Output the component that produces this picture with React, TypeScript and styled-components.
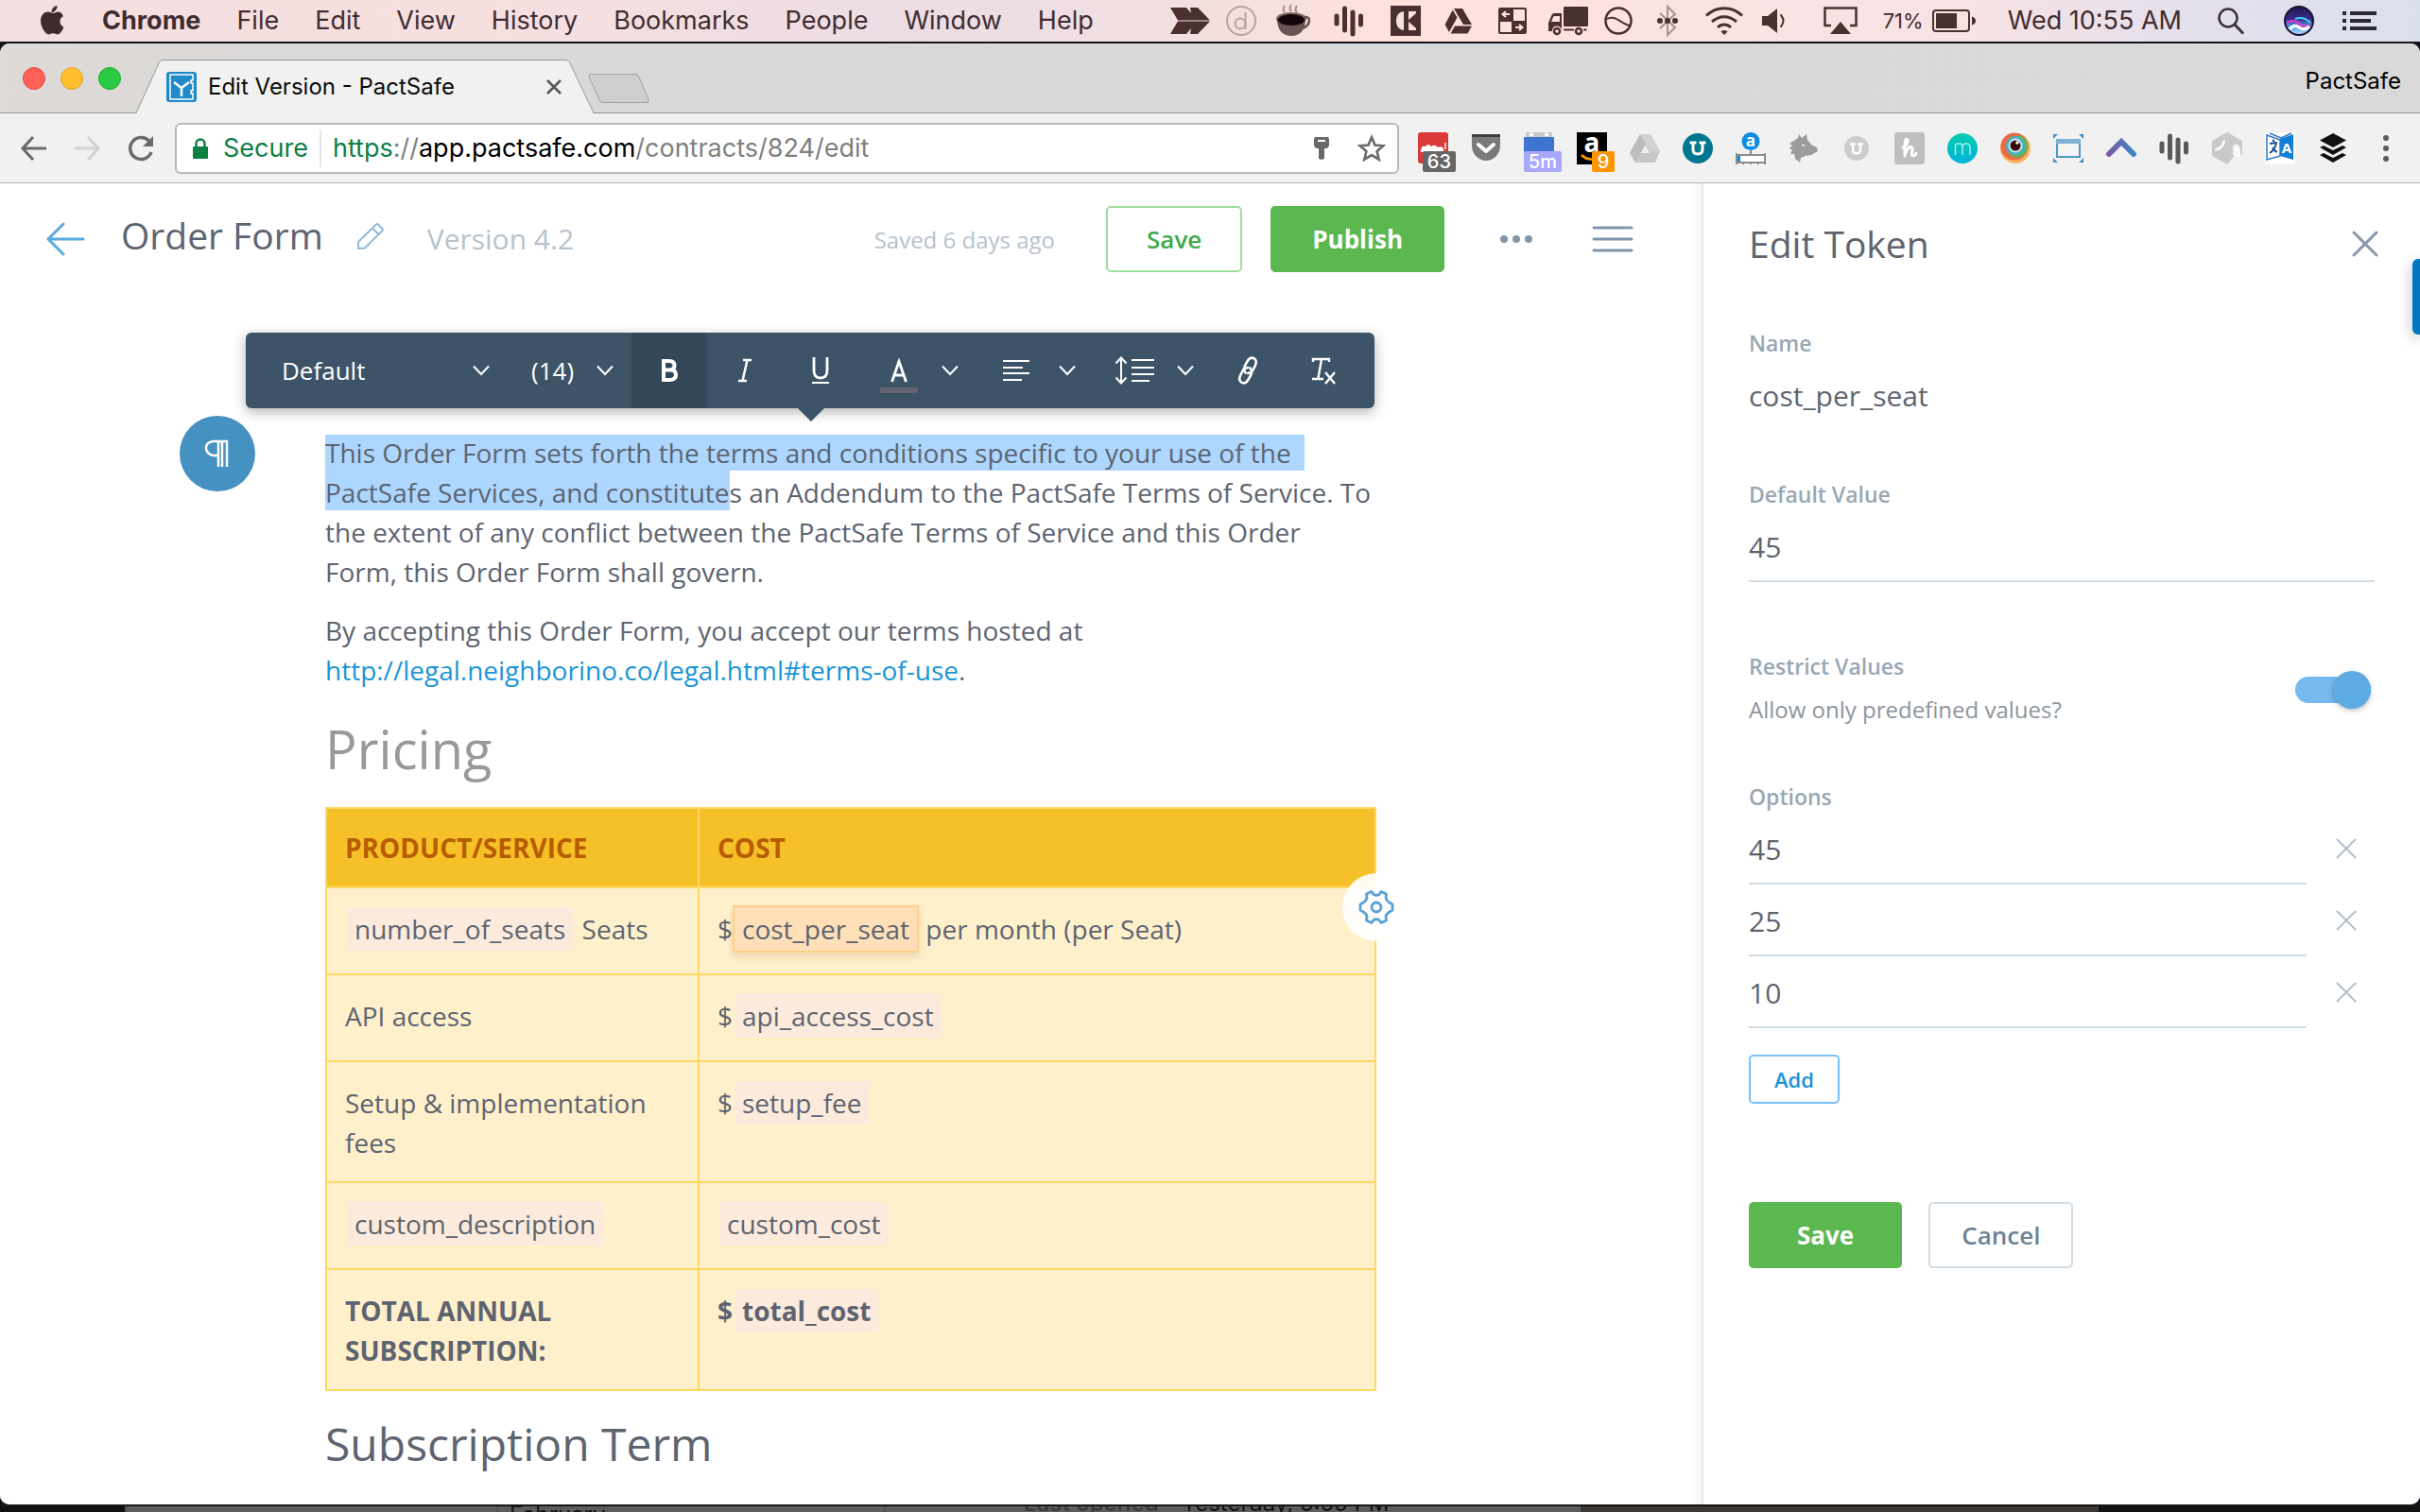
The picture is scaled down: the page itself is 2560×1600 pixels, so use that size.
import React from "react";
import styled, { createGlobalStyle, css } from "styled-components";

const SANS = '"Open Sans", "Noto Sans", sans-serif';
const SYSTEM = 'Inter, Roboto, sans-serif';

const Global = createGlobalStyle`
  *, *::before, *::after { box-sizing: border-box; }
  html, body { margin: 0; height: 100%; overflow: hidden; }
  #root { height: 100%; }
  button, input, select { font: inherit; color: inherit; margin: 0; padding: 0; border: 0; background: none; border-radius: 0; }
  button { cursor: pointer; }
  svg { display: block; flex: none; overflow: visible; }
  h1, h2, p { margin: 0; font-weight: 400; }
`;

const Screen = styled.div`
  display: flex;
  flex-direction: column;
  height: 100vh;
  background: #16121a;
  font-family: ${SANS};
`;

/* ---------- system menu bar ---------- */

const MenuBar = styled.header`
  display: flex;
  align-items: center;
  justify-content: space-between;
  height: 44px;
  margin-bottom: 2px;
  padding: 0 46px 0 42px;
  font-family: ${SYSTEM};
  font-size: 27px;
  line-height: 44px;
  white-space: nowrap;
  color: #402c30;
  background: linear-gradient(90deg, #f4dfe0 0%, #f8dfdf 20%, #ecdde5 38%, #f2dfe1 48%, #ffe1da 58%, #fbe3e4 72%, #f8e2e4 81%, #e5e0ec 90%, #dadfee 100%);
`;

const MenuList = styled.nav`
  display: flex;
  align-items: center;
  gap: 38px;
`;

const MenuItem = styled.button<{ $strong?: boolean }>`
  font-weight: ${(p) => (p.$strong ? 700 : 400)};
  margin-left: ${(p) => (p.$strong ? 2 : 0)}px;
`;

const Status = styled.div`
  display: flex;
  align-items: center;
`;

const Slot = styled.span<{ $w: number }>`
  display: flex;
  justify-content: center;
  width: ${(p) => p.$w}px;
`;

const Percent = styled.span`
  font-size: 22px;
  margin-right: 9px;
`;

const Clock = styled.span`
  margin: 0 26px 0 34px;
`;

const StatusGap = styled.span`
  display: flex;
  align-items: center;
  gap: 30px;
`;

/* ---------- browser window ---------- */

const Window = styled.div`
  display: flex;
  flex-direction: column;
  flex: 1;
  min-height: 0;
  overflow: hidden;
  border-radius: 10px;
  background: #fff;
`;

const TabStrip = styled.div`
  display: flex;
  align-items: flex-end;
  height: 74px;
  padding-left: 24px;
  border-bottom: 1px solid #989898;
  background: linear-gradient(90deg, #dddad7, #d8d8d9 35%, #d9d9d9);
  font-family: ${SYSTEM};
  font-size: 24px;
`;

const Lights = styled.div`
  display: flex;
  align-self: center;
  gap: 16px;
  width: 120px;
`;

const Light = styled.button<{ $fill: string; $edge: string }>`
  width: 24px;
  height: 24px;
  border-radius: 50%;
  border: 1px solid ${(p) => p.$edge};
  background: ${(p) => p.$fill};
`;

const Tab = styled.div`
  display: grid;
  width: 484px;
  height: 57px;
  margin-bottom: -1px;
  > * { grid-area: 1 / 1; }
`;

const TabBody = styled.div`
  display: flex;
  align-items: center;
  padding: 0 34px 0 32px;
  gap: 12px;
`;

const TabTitle = styled.span`
  flex: 1;
  white-space: nowrap;
  color: #0a0a0a;
`;

const NewTab = styled.button`
  align-self: center;
  margin: 22px 0 0 -6px;
`;

const Profile = styled.button`
  align-self: center;
  margin: 6px 20px 0 auto;
  color: #000;
`;

const NavBar = styled.div`
  display: flex;
  align-items: center;
  height: 74px;
  padding: 0 20px;
  border-bottom: 1px solid #b4b4b4;
  background: #f1f1f1;
`;

const NavButtons = styled.div`
  display: flex;
  gap: 24px;
  width: 165px;
`;

const Omnibox = styled.div`
  display: flex;
  align-items: center;
  flex: 1;
  height: 54px;
  padding: 0 10px 0 17px;
  border: 2px solid #b8b8b8;
  border-radius: 6px;
  background: #fff;
  font-family: ${SYSTEM};
  font-size: 27px;
  white-space: nowrap;
`;

const Secure = styled.span`
  display: flex;
  align-items: center;
  gap: 16px;
  padding-right: 12px;
  border-right: 2px solid #e4e4e4;
  line-height: 40px;
  color: #0b8043;
`;

const Address = styled.div`
  flex: 1;
  padding-left: 12px;
  color: #7f7f7f;
  outline: none;
  b { font-weight: 400; color: #000; }
  i { font-style: normal; color: #0b8043; }
`;

const BoxTools = styled.div`
  display: flex;
  align-items: center;
  gap: 28px;
`;

const Extensions = styled.div`
  display: flex;
  align-items: center;
  gap: 24px;
  padding-left: 20px;
`;

const Ext = styled.button`
  position: relative;
  display: grid;
  place-items: center;
  width: 32px;
  height: 34px;
`;

const Badge = styled.span<{ $bg: string }>`
  position: absolute;
  right: -8px;
  bottom: -8px;
  min-width: 24px;
  padding: 0 5px;
  border-radius: 2px;
  background: ${(p) => p.$bg};
  color: #fff;
  font: 500 20px/22px ${SYSTEM};
`;

/* ---------- page ---------- */

const Page = styled.div`
  position: relative;
  display: flex;
  flex: 1;
  min-height: 0;
  overflow: hidden;
  color: #5d6470;
`;

const Editor = styled.main`
  flex: 1;
  min-width: 0;
  background: linear-gradient(90deg, #fff calc(100% - 14px), #f8f8f8);
`;

const EditorBar = styled.div`
  display: flex;
  align-items: center;
  justify-content: space-between;
  padding: 24px 68px 24px 48px;
  white-space: nowrap;
`;

const Lead = styled.div`
  display: flex;
  align-items: center;
  gap: 38px;
`;

const TitleGroup = styled.div`
  display: flex;
  align-items: baseline;
  gap: 36px;
  padding-bottom: 8px;
`;

const Title = styled.h1`
  font-size: 39px;
  line-height: 56px;
`;

const Version = styled.span`
  padding-left: 10px;
  font-size: 30px;
  color: #b6c2ce;
`;

const Actions = styled.div`
  display: flex;
  align-items: center;
  gap: 30px;
`;

const Saved = styled.span`
  margin-right: 24px;
  font-size: 24px;
  color: #b6c2ce;
`;

const Button = styled.button<{ $kind: "solid" | "outline" | "plain" | "small" }>`
  height: 70px;
  padding: 0 44px;
  border-radius: 5px;
  font-size: 26px;
  font-weight: 600;
  ${(p) => p.$kind === "solid" && css`
    background: #5bb750;
    color: #fff;
    font-weight: 700;
  `}
  ${(p) => p.$kind === "outline" && css`
    border: 2px solid #9cdf9c;
    padding: 0 41px;
    color: #3fab4a;
  `}
  ${(p) => p.$kind === "plain" && css`
    border: 2px solid #d0dce6;
    padding: 0 33px;
    color: #6d8396;
  `}
  ${(p) => p.$kind === "small" && css`
    height: 52px;
    border: 2px solid #78c0fa;
    padding: 0 25px;
    font-size: 22px;
    color: #1b95d6;
  `}
`;

const IconButton = styled.button<{ $w: number }>`
  display: flex;
  align-items: center;
  justify-content: center;
  width: ${(p) => p.$w}px;
  height: 48px;
`;

const Doc = styled.article`
  max-width: 1112px;
  margin: 0 auto;
  padding-top: 146px;
  font-size: 28px;
  line-height: 42px;
`;

const Block = styled.div`
  position: relative;
`;

const Para = styled.p`
  margin-bottom: 20px;
`;

const Selected = styled.mark<{ $joined?: boolean }>`
  color: inherit;
  background: #add7ff;
  ${(p) => (p.$joined ? "padding-top: 4px;" : "padding-right: 14px;")}
`;

const DocLink = styled.a`
  color: #1b95d6;
  text-decoration: none;
`;

const Heading = styled.h2<{ $main?: boolean }>`
  margin: 24px 0;
  font-size: ${(p) => (p.$main ? 56 : 48)}px;
  line-height: ${(p) => (p.$main ? 76 : 64)}px;
  color: ${(p) => (p.$main ? "#999" : "#5d6470")};
`;

const ParaMark = styled.button`
  position: absolute;
  top: -18px;
  left: -154px;
  display: grid;
  place-items: center;
  width: 80px;
  height: 80px;
  border-radius: 50%;
  background: #4591c2;
`;

const FormatBar = styled.div`
  position: absolute;
  bottom: calc(100% + 26px);
  left: -84px;
  right: 2px;
  display: flex;
  height: 80px;
  padding-right: 14px;
  border-radius: 6px;
  background: #3d5368;
  color: #fff;
  font-size: 26px;
  box-shadow: 0 4px 14px rgba(0, 0, 0, 0.3);
  &::after {
    content: "";
    position: absolute;
    top: 100%;
    left: 50%;
    margin-left: -13px;
    border: 14px solid transparent;
    border-top-color: #3d5368;
    border-bottom: 0;
  }
`;

const Picker = styled.span<{ $wide?: boolean }>`
  display: grid;
  align-items: center;
  flex: ${(p) => (p.$wide ? "1" : "none")};
  width: 128px;
  > * { grid-area: 1 / 1; }
  > select {
    width: 100%;
    height: 100%;
    padding-left: ${(p) => (p.$wide ? 38 : 22)}px;
    appearance: none;
    outline: none;
  }
  > svg {
    justify-self: end;
    margin-right: ${(p) => (p.$wide ? 22 : 19)}px;
    pointer-events: none;
  }
`;

const Tool = styled.button<{ $on?: boolean; $w?: number; $gap?: number }>`
  display: flex;
  align-items: center;
  justify-content: center;
  width: ${(p) => p.$w ?? 80}px;
  gap: ${(p) => p.$gap ?? 24}px;
  background: ${(p) => (p.$on ? "#334759" : "none")};
`;

const TableWrap = styled.div`
  position: relative;
`;

const Table = styled.table`
  width: 100%;
  border-collapse: collapse;
  background: #fff0cc;
  td, th {
    border: 2px solid #ffd763;
    padding: 22px 19px 20px;
    text-align: left;
    vertical-align: top;
    font-weight: 400;
  }
  td { height: 92px; }
  thead th {
    padding: 20px 19px;
    background: #f6c128;
    color: #b85c00;
    font-weight: 700;
  }
  th:first-child { width: 394px; }
  tbody tr:last-child td { font-weight: 700; }
`;

const Token = styled.span<{ $active?: boolean }>`
  margin: 0 2px;
  padding: 4px 8px;
  background: #fcebdc;
  ${(p) => p.$active && css`
    border: 2px solid #ffcf85;
    margin: 0;
    background: #ffdfb8;
    box-shadow: 0 4px 8px rgba(120, 80, 0, 0.16);
  `}
`;

const Gear = styled.button`
  position: absolute;
  top: 70px;
  right: -36px;
  display: grid;
  place-items: center;
  width: 72px;
  height: 72px;
  border-radius: 50%;
  background: rgba(255, 255, 255, 0.92);
`;

/* ---------- token panel ---------- */

const Panel = styled.aside`
  display: flex;
  flex-direction: column;
  flex: none;
  width: 760px;
  padding: 36px 48px 0;
  border-left: 2px solid #deebf5;
  background: #fff;
`;

const PanelTop = styled.div`
  display: flex;
  align-items: center;
  justify-content: space-between;
  margin-bottom: 60px;
`;

const Close = styled.button`
  margin-right: -8px;
`;

const Label = styled.label`
  display: block;
  font-size: 23px;
  font-weight: 600;
  line-height: 34px;
  color: #98a7b5;
`;

const Field = styled.input<{ $plain?: boolean }>`
  display: block;
  width: 100%;
  height: 76px;
  padding-top: 2px;
  font-size: 30px;
  border-bottom: 2px solid ${(p) => (p.$plain ? "transparent" : "#cfdce6")};
  outline: none;
`;

const FieldGroup = styled.div`
  margin-bottom: 50px;
`;

const RestrictRow = styled.div`
  display: flex;
  align-items: center;
  justify-content: space-between;
  margin: 22px 4px 58px 0;
`;

const Hint = styled.p`
  margin-top: 12px;
  font-size: 24px;
  line-height: 34px;
  color: #8c959e;
`;

const Toggle = styled.input`
  position: relative;
  width: 80px;
  height: 28px;
  margin-top: 4px;
  appearance: none;
  border-radius: 14px;
  background: #75b9ee;
  &::before {
    content: "";
    position: absolute;
    top: -6px;
    right: 0;
    width: 40px;
    height: 40px;
    border-radius: 50%;
    background: #5dabe2;
    box-shadow: 0 2px 5px rgba(0, 0, 0, 0.25);
  }
`;

const OptionRow = styled.div`
  display: grid;
  grid-template-columns: 1fr 60px;
  column-gap: 12px;
  align-items: center;
  justify-items: center;
`;

const AddRow = styled.div`
  margin: 28px 0 104px;
`;

const PanelButtons = styled.div`
  display: flex;
  gap: 28px;
  > :first-child { padding: 0 51px; }
`;

const Launcher = styled.button`
  position: absolute;
  top: 80px;
  right: 0;
  width: 8px;
  height: 80px;
  border-radius: 6px 0 0 6px;
  background: #0077be;
  box-shadow: 0 4px 14px rgba(0, 0, 0, 0.3);
`;

/* ---------- desktop behind the window ---------- */

const Desktop = styled.div`
  display: flex;
  height: 8px;
  padding-left: 132px;
  overflow: hidden;
  border-top: 2px solid #161616;
  background: #121110;
  font: 24px/18px ${SYSTEM};
  color: #111;
`;

const Sheet = styled.div<{ $w: number; $low?: boolean; $dark?: boolean }>`
  display: flex;
  align-items: ${(p) => (p.$low ? "flex-end" : "flex-start")};
  width: ${(p) => p.$w}px;
  padding-left: 12px;
  white-space: nowrap;
  border-left: 2px solid ${(p) => (p.$dark ? "#3b3835" : "#4f4f4f")};
  background: ${(p) => (p.$dark ? "#3b3835" : "#5c5c5c")};
`;

const Dim = styled.span`
  margin: 0 24px 0 134px;
  font-weight: 600;
  color: #3c3c3c;
`;

/* ---------- icons ---------- */

const Chevron = () => (
  <svg width="18" height="12" viewBox="0 0 18 12" fill="none" stroke="#fff" strokeWidth="2">
    <path d="M1 1.500 9 10l8-8.500" />
  </svg>
);

const Cross = ({ size, color, box }: { size: number; color: string; box: number }) => (
  <svg width={box} height={box} viewBox={`${-box / 2} ${-box / 2} ${box} ${box}`} stroke={color} strokeWidth={size > 22 ? 3 : 2} strokeLinecap="round">
    <path d={`M${-size / 2} ${-size / 2}L${size / 2} ${size / 2}M${size / 2} ${-size / 2}L${-size / 2} ${size / 2}`} />
  </svg>
);

const Apple = () => (
  <svg width="26" height="32" viewBox="0 0 26 32" fill="#402c30">
    <path d="M18.500 0c.2 2-.6 3.800-1.700 5.100-1.100 1.300-2.700 2.200-4.300 2.100-.2-1.900.7-3.800 1.700-5C15.300.9 17.100.1 18.500 0zM24.800 11.200c-.3.200-3.300 1.800-3.300 5.500 0 4.300 3.800 5.800 3.900 5.900 0 .1-.6 2.100-2 4.200-1.200 1.800-2.500 3.600-4.500 3.600s-2.500-1.200-4.800-1.200-3 1.200-4.800 1.200c-1.900 0-3.200-1.700-4.700-3.800C2.700 24.100 1 19.900 1 16c0-6.200 4-9.500 8-9.500 2.100 0 3.900 1.400 5.200 1.400 1.300 0 3.200-1.500 5.600-1.500.9 0 3.500.1 5 4.800z" />
  </svg>
);

const Drive = ({ c, w, h }: { c: string; w: number; h: number }) => (
  <svg width={w} height={h} viewBox="0 0 30 28" fill={c}>
    <path d="M10 1h9l10 17H20zM8.800 2.500l4.700 8L5 26 .5 18zM11 19.500h18L24.500 27.500H6.500z" />
  </svg>
);

const Bars = ({ c }: { c: string }) => (
  <svg width="32" height="34" viewBox="0 0 32 34" stroke={c} strokeWidth="5" strokeLinecap="round">
    <path d="M3 12v8M11.500 4v23M20 8v23M28.500 12v9" />
  </svg>
);

const MENU = ["File", "Edit", "View", "History", "Bookmarks", "People", "Window", "Help"];
const INK = "#4a302f";

const StatusIcons = () => (
  <>
    <Slot $w={46}>
      <svg width="42" height="28" viewBox="0 0 42 28" fill={INK}>
        <path d="M0 0h17l5 6-1-6h8l13 13.500H8zM8 14.500h34L29 28h-8l1-6-5 6H0z" />
      </svg>
    </Slot>
    <Slot $w={62}>
      <svg width="32" height="34" viewBox="0 0 32 34" fill="none" stroke="#b9a2a4" strokeWidth="2">
        <circle cx="16" cy="17" r="15" />
        <circle cx="15" cy="20" r="5.500" />
        <path d="M20.500 8v18" />
      </svg>
    </Slot>
    <Slot $w={48}>
      <svg width="38" height="34" viewBox="0 0 38 34">
        <path d="M10 8q-3-3 0-7M17 7q-3-3 0-7M23 8q-3-3 0-7" fill="none" stroke="#a58f91" strokeWidth="2" />
        <ellipse cx="17" cy="15" rx="16" ry="7" fill="#7a6466" />
        <path d="M2 15c0 13 7 18 15 18s15-5 15-18z" fill="#6a5255" />
        <ellipse cx="17" cy="16" rx="14" ry="6" fill="#120608" />
        <path d="M31 13c8-1 6 10-3 12" fill="none" stroke="#6a5255" strokeWidth="2.500" />
      </svg>
    </Slot>
    <Slot $w={70}><Bars c={INK} /></Slot>
    <Slot $w={50}>
      <svg width="32" height="32" viewBox="0 0 32 32">
        <path d="M0 0h32v32H0z" fill={INK} />
        <path d="M14 6v20C8 25 6 21 6 16S8 7 14 6zM19 6h8v20h-8z" fill="#fce2dc" />
        <path d="M27 8v16l-9-8z" fill={INK} />
      </svg>
    </Slot>
    <Slot $w={62}><Drive c={INK} w={30} h={28} /></Slot>
    <Slot $w={52}>
      <svg width="30" height="28" viewBox="0 0 30 28" fill={INK}>
        <path fillRule="evenodd" d="M2 0h26a2 2 0 0 1 2 2v24a2 2 0 0 1-2 2H2a2 2 0 0 1-2-2V2a2 2 0 0 1 2-2zM16 2v12h12V3q0-1-1-1zM2 15v10q0 1 1 1h11V15z" />
        <path d="M12 7H5m3-3L4.500 7 8 10M18 21h7m-3-3 3.500 3-3.500 3" fill="none" stroke="#fde2de" strokeWidth="2" />
      </svg>
    </Slot>
    <Slot $w={66}>
      <svg width="42" height="30" viewBox="0 0 42 30" fill={INK}>
        <rect x="16" width="26" height="21" rx="1" />
        <path fillRule="evenodd" d="M14 7H6Q4 7 3 10L0 17v9h4a5 5 0 0 1 10-1zM12 10v6H3l2-5q.500-1 1.500-1z" />
        <circle cx="9" cy="26" r="3" fill="none" stroke={INK} strokeWidth="2.500" />
        <circle cx="32" cy="26" r="3" fill="none" stroke={INK} strokeWidth="2.500" />
        <path d="M16 23.500h11v2H16zM37 23.500h4l-1 2h-3z" />
      </svg>
    </Slot>
    <Slot $w={40}>
      <svg width="30" height="30" viewBox="0 0 30 30" fill="none" stroke={INK} strokeWidth="2.500">
        <circle cx="15" cy="15" r="13.500" />
        <path d="M3 13C12 8 17 18 27 20" strokeWidth="2" />
      </svg>
    </Slot>
    <Slot $w={64}>
      <svg width="24" height="34" viewBox="0 0 24 34" fill="none" stroke="#a98f92" strokeWidth="2">
        <path d="M4 9l16 15-8 8V2l8 8L4 25" />
        <g fill={INK} stroke="none"><circle cx="4" cy="17" r="3" /><circle cx="12" cy="17" r="3" /><circle cx="20" cy="17" r="3" /></g>
      </svg>
    </Slot>
    <Slot $w={56}>
      <svg width="40" height="30" viewBox="0 0 40 30" fill="none" stroke={INK} strokeWidth="3">
        <path d="M1 9.500C12-1 28-1 39 9.500M7 16c8-7 18-7 26 0M13 22c4-4 10-4 14 0" />
        <path d="M16.500 26.500c2-2 5-2 7 0L20 30z" fill={INK} stroke="none" />
      </svg>
    </Slot>
    <Slot $w={50}>
      <svg width="26" height="26" viewBox="0 0 26 26" fill={INK}>
        <path d="M0 8h6l10-8v26L6 18H0z" />
        <path d="M20 7q5 6 0 12" fill="none" stroke={INK} strokeWidth="2" strokeLinecap="round" />
      </svg>
    </Slot>
    <Slot $w={90}>
      <svg width="36" height="30" viewBox="0 0 36 30" fill="none" stroke={INK} strokeWidth="2.500">
        <path d="M8 20H1.500V1.500h33V20H28" />
        <path d="M18 16l11 13H7z" fill={INK} stroke="none" />
      </svg>
    </Slot>
  </>
);

const Extension = () => (
  <Extensions>
    <Ext aria-label="Last pass">
      <svg width="32" height="34" viewBox="0 0 32 34">
        <rect width="32" height="33" rx="3" fill="#d93a37" />
        <path d="M3 19q1-6 5-4 3-4 6 0 4-3 7 1 3-2 6 1v4H3z" fill="#fff" />
        <path d="M29 11v7" stroke="#fff" strokeWidth="1.500" />
      </svg>
      <Badge $bg="#666">63</Badge>
    </Ext>
    <Ext aria-label="Pocket">
      <svg width="32" height="32" viewBox="0 0 32 32">
        <path d="M1 2h30v11a15 16 0 0 1-30 0z" fill="#7a7a7a" />
        <path d="M1 1h30v3H1z" fill="#3e3e3e" />
        <path d="m8 12 8 7 8-7" fill="none" stroke="#fff" strokeWidth="4" strokeLinecap="round" strokeLinejoin="round" />
      </svg>
    </Ext>
    <Ext aria-label="Calendar timer">
      <svg width="32" height="34" viewBox="0 0 32 34">
        <path d="M2 0h28v8H2z" fill="#c9c9c9" />
        <path d="M0 6q0-1 1-1h30q1 0 1 1v16H0z" fill="#3f74d1" />
        <circle cx="8" cy="2.500" r="2" fill="#fff" /><circle cx="24" cy="2.500" r="2" fill="#fff" />
      </svg>
      <Badge $bg="#a9a9fb">5m</Badge>
    </Ext>
    <Ext aria-label="Amazon assistant">
      <svg width="32" height="34" viewBox="0 0 32 34">
        <path d="M0 0h32v34H0z" />
        <text x="16" y="21" textAnchor="middle" fontFamily={SANS} fontWeight="700" fontSize="28" fill="#fff">a</text>
        <path d="M5 24q6 6 14 4" fill="none" stroke="#f90" strokeWidth="2.500" />
      </svg>
      <Badge $bg="#ff9500">9</Badge>
    </Ext>
    <Ext aria-label="Drive">
      <svg width="32" height="30" viewBox="0 0 32 30">
        <path fillRule="evenodd" d="M11 0h11l10 18-5 12H6L0 20zM16.500 12 12 20h9z" fill="#c6c6c6" />
        <path d="M11 0h11l10 18H21z" fill="#d2d2d2" />
        <path d="M0 20 11 0l5.500 10L6 30z" fill="#bdbdbd" />
        <path d="M16.500 12 12 20h9z" fill="#f1f1f1" />
      </svg>
    </Ext>
    <Ext aria-label="U extension">
      <svg width="32" height="34" viewBox="0 0 32 34">
        <circle cx="16" cy="17" r="16" fill="#007791" />
        <path d="M7.500 11h7M17.500 11h7M11 11v7q0 5 5 5t5-5v-7" fill="none" stroke="#fff" strokeWidth="3" />
      </svg>
    </Ext>
    <Ext aria-label="Price tracker">
      <svg width="32" height="34" viewBox="0 0 32 34">
        <circle cx="16" cy="9.500" r="9.500" fill="#0c8ce9" />
        <text x="16" y="15" textAnchor="middle" fontFamily={SANS} fontWeight="700" fontSize="17" fill="#fff">a</text>
        <path d="M16 19v4M1 22v12M31 22v12M1 24h30M1 32h30M8 32v2M16 32v2M24 32v2" stroke="#8c8c8c" strokeWidth="2" />
        <path d="M2 25h28v6H2z" fill="#fff" /><path d="M2 25h3v6H2z" fill="#0c8ce9" />
      </svg>
    </Ext>
    <Ext aria-label="Wolf">
      <svg width="32" height="30" viewBox="0 0 32 30" fill="#9c9c9c">
        <path d="M1 10 10 4l1-4 3 4 5-4 1 6 4 5 6 3 1 4-7 4-6 1-5 2-1 5-5-4-1-5-4 0 2-4-3-2 3-3z" />
        <path d="m14 10 4 2-3 1z" fill="#f1f1f1" />
      </svg>
    </Ext>
    <Ext aria-label="U extension, inactive">
      <svg width="26" height="28" viewBox="0 0 26 28">
        <circle cx="13" cy="14" r="13" fill="#cdcdcd" />
        <path d="M6 9.500h6M14 9.500h6M9 9.500v5q0 5 4 5t4-5v-5" fill="none" stroke="#fff" strokeWidth="2.500" />
      </svg>
    </Ext>
    <Ext aria-label="Honey">
      <svg width="32" height="34" viewBox="0 0 32 34">
        <rect width="32" height="34" rx="3" fill="#bfbfc1" />
        <path d="M9 16c3-1 6-5 5-8-1-2-3 0-3 4v13M12 22c1-6 7-9 7-4 0 3-2 7 1 7 2 0 3-2 3-3" fill="none" stroke="#fff" strokeWidth="3" strokeLinecap="round" />
      </svg>
    </Ext>
    <Ext aria-label="m extension">
      <svg width="32" height="34" viewBox="0 0 32 34">
        <defs><linearGradient id="teal" x1="0" y1="1" x2="0" y2="0"><stop stopColor="#00b4dc" /><stop offset="1" stopColor="#05cdb0" /></linearGradient></defs>
        <circle cx="16" cy="17" r="16" fill="url(#teal)" />
        <path d="M8.500 24V13q0-1 4-1 3.500 0 3.500 4v8m0-8q0-4 4-4t4 4v8" fill="none" stroke="#a5efe9" strokeWidth="1.500" />
      </svg>
    </Ext>
    <Ext aria-label="Colour picker">
      <svg width="32" height="34" viewBox="0 0 32 34">
        <circle cx="16" cy="17" r="16" fill="#f9b563" /><circle cx="15" cy="15" r="14.500" fill="#ec6a45" />
        <circle cx="18" cy="15" r="11.500" fill="#62b35c" /><circle cx="16" cy="14" r="10" fill="#45b1c9" /><circle cx="16" cy="14" r="7.500" fill="#cde7ec" />
        <circle cx="16" cy="14" r="5.500" fill="#330a08" /><circle cx="18" cy="11" r="1.800" fill="#fff" />
      </svg>
    </Ext>
    <Ext aria-label="Window resizer">
      <svg width="32" height="32" viewBox="0 0 32 32">
        <path d="M0 1h5L0 6zM32 1h-5l5 5zM0 31h5l-5-5zM32 31h-5l5-5z" fill="#3f8fc0" />
        <rect x="4" y="7" width="24" height="18" fill="#f4f4f4" stroke="#4b97c6" strokeWidth="2" />
        <path d="M3 6h26v5H3z" fill="#7fb2d3" />
      </svg>
    </Ext>
    <Ext aria-label="Caret">
      <svg width="32" height="22" viewBox="0 0 32 22">
        <defs><linearGradient id="caret"><stop stopColor="#7a5aa0" /><stop offset="1" stopColor="#3f86c8" /></linearGradient></defs>
        <path d="M3 17 16 4l13 13" fill="none" stroke="url(#caret)" strokeWidth="6" strokeLinecap="round" />
      </svg>
    </Ext>
    <Ext aria-label="Audio bars"><Bars c="#5a5a5a" /></Ext>
    <Ext aria-label="Box">
      <svg width="32" height="34" viewBox="0 0 32 34">
        <path d="m16 0 16 9v15l-7-1-9 11L0 25V9z" fill="#c9c9c9" />
        <path d="M3 18c2-2 6-2 7-6q1-4 4-4 0 6-4 9-3 3-7 3zM22 24V15q3-4 6-1l2 3v9z" fill="#f8f8f8" />
      </svg>
    </Ext>
    <Ext aria-label="Translate">
      <svg width="32" height="34" viewBox="0 0 32 34">
        <path d="M0 0h32v34H0z" fill="#fff" />
        <path d="M5 1l12 5 11-5" fill="none" stroke="#3676c4" strokeWidth="1.500" />
        <path d="M16 7 30 2v27l-14-4z" fill="#0f7fd8" />
        <path d="M2 3l14 5v17L2 29z" fill="#fff" stroke="#2f74c6" strokeWidth="1.500" />
        <path d="M5 12l7-1q-1 7-7 11m3-6q2 4 5 5M8 8l2 2" fill="none" stroke="#1b4a94" strokeWidth="1.800" />
        <text x="23" y="22" textAnchor="middle" fontFamily={SANS} fontWeight="700" fontSize="15" fill="#fff">A</text>
      </svg>
    </Ext>
    <Ext aria-label="Buffer">
      <svg width="30" height="32" viewBox="0 0 30 32" fill="#111">
        <path d="M15 0l14 7.500L15 15 1 7.500z" />
        <path d="m1 15 4-2 10 5 10-5 4 2-14 8zM1 23l4-2 10 5 10-5 4 2-14 8z" />
      </svg>
    </Ext>
    <Ext aria-label="Menu">
      <svg width="6" height="28" viewBox="0 0 6 28" fill="#5a5a5a">
        <circle cx="3" cy="3" r="3" /><circle cx="3" cy="14" r="3" /><circle cx="3" cy="25" r="3" />
      </svg>
    </Ext>
  </Extensions>
);

const OPTIONS = ["45", "25", "10"];

export default function App() {
  return (
    <Screen>
      <Global />
      <MenuBar>
        <MenuList>
          <Apple />
          <MenuItem $strong>Chrome</MenuItem>
          {MENU.map((m) => <MenuItem key={m}>{m}</MenuItem>)}
        </MenuList>
        <Status>
          <StatusIcons />
          <Percent>71%</Percent>
          <svg width="46" height="24" viewBox="0 0 46 24" fill="none" stroke={INK} strokeWidth="2">
            <rect x="1" y="1" width="38" height="22" rx="3" />
            <path d="M4 4h22v16H4z" fill={INK} stroke="none" />
            <path d="M42 7.500q4 1.500 4 4.500t-4 4.500z" fill={INK} stroke="none" />
          </svg>
          <Clock>Wed 10:55 AM</Clock>
          <StatusGap>
            <Slot $w={52}>
              <svg width="28" height="28" viewBox="0 0 28 28" fill="none" stroke="#3a303c" strokeWidth="2.500">
                <circle cx="11" cy="11" r="9.500" /><path d="m18 18 9 9.500" strokeWidth="3" />
              </svg>
            </Slot>
            <svg width="32" height="32" viewBox="0 0 32 32">
              <defs>
                <linearGradient id="orb" x1="0" y1="0" x2="0" y2="1"><stop stopColor="#241650" /><stop offset=".45" stopColor="#3b2a8c" /><stop offset=".7" stopColor="#49a5e8" /><stop offset="1" stopColor="#c9d2ff" /></linearGradient>
              </defs>
              <circle cx="16" cy="16" r="15" fill="url(#orb)" stroke="#15122e" strokeWidth="2" />
              <path d="M3 18q8-4 13 1t12 2" fill="none" stroke="#d53fd0" strokeWidth="2.500" />
              <path d="M6 25q5-6 10-2t11-1" fill="none" stroke="#fff" strokeWidth="3" />
              <path d="M12 14q9-3 16 4" fill="none" stroke="#45d6f2" strokeWidth="2" />
            </svg>
            <svg width="36" height="20" viewBox="0 0 36 20" fill="#2c2734">
              <path d="M0 0h4v4H0zM0 8h4v4H0zM0 16h4v4H0zM8 0h28v4H8zM8 8h22v4H8zM8 16h28v4H8z" />
            </svg>
          </StatusGap>
        </Status>
      </MenuBar>

      <Window>
        <TabStrip>
          <Lights>
            <Light $fill="#ff6159" $edge="#e24640" aria-label="Close window" />
            <Light $fill="#ffbf2f" $edge="#dfa023" aria-label="Minimise window" />
            <Light $fill="#2acb42" $edge="#1daa2d" aria-label="Zoom window" />
          </Lights>
          <Tab>
            <svg width="484" height="57" viewBox="0 0 484 57">
              <path d="M0 56.500 24.500 3Q26 .500 29 .500H454Q457 .500 458.500 3L484 56.500" fill="#f1f1f1" stroke="#989898" />
              <path d="M1 57h482" stroke="#f1f1f1" strokeWidth="2" />
            </svg>
            <TabBody>
              <svg width="32" height="32" viewBox="0 0 32 32">
                <rect width="32" height="32" rx="3" fill="#1f8bc9" />
                <path d="M4 3h24v6h-2v3h2v8h-2v3h2v6H4z" fill="none" stroke="#fff" strokeWidth="1.500" />
                <path d="M8 11l8 6v9M16 17l8-6" fill="none" stroke="#fff" strokeWidth="2.500" />
              </svg>
              <TabTitle>Edit Version - PactSafe</TabTitle>
              <svg width="16" height="16" viewBox="0 0 16 16" stroke="#555" strokeWidth="2.500"><path d="m1 1 14 14M15 1 1 15" /></svg>
            </TabBody>
          </Tab>
          <NewTab aria-label="New tab">
            <svg width="66" height="32" viewBox="0 0 66 32" fill="#cfcfcf" stroke="#a0a0a0">
              <path d="M3 .500h47q3 0 4 3l10 24q1 3-1 3H16q-3 0-4-3L1 3.500Q0 .500 3 .500z" />
            </svg>
          </NewTab>
          <Profile>PactSafe</Profile>
        </TabStrip>

        <NavBar>
          <NavButtons>
            <button aria-label="Back">
              <svg width="32" height="28" viewBox="0 0 32 28" fill="none" stroke="#6a6a6a" strokeWidth="3"><path d="M15 2 4 14l11 12M4 14h25" /></svg>
            </button>
            <button aria-label="Forward">
              <svg width="32" height="28" viewBox="0 0 32 28" fill="none" stroke="#d2d2d2" strokeWidth="3"><path d="m17 2 11 12-11 12M28 14H3" /></svg>
            </button>
            <button aria-label="Reload">
              <svg width="32" height="28" viewBox="0 0 32 28" fill="none" stroke="#6a6a6a" strokeWidth="3.500">
                <path d="M28 18A11.500 11.500 0 1 1 25.500 6" /><path d="M30 1v11H19z" fill="#6a6a6a" stroke="none" />
              </svg>
            </button>
          </NavButtons>
          <Omnibox>
            <Secure>
              <svg width="16" height="22" viewBox="0 0 16 22"><rect y="9" width="16" height="13" rx="1" fill="#0b8043" /><path d="M3.500 10V6a4.500 4.500 0 0 1 9 0v4" fill="none" stroke="#0b8043" strokeWidth="2.500" /></svg>
              Secure
            </Secure>
            <Address role="textbox" aria-label="Address" contentEditable suppressContentEditableWarning spellCheck={false}>
              <i>https</i>://<b>app.pactsafe.com</b>/contracts/824/edit
            </Address>
            <BoxTools>
              <button aria-label="Saved passwords">
                <svg width="16" height="24" viewBox="0 0 16 24" fill="#6a6a6a"><path fillRule="evenodd" d="M1 0h14l1 2v7l-2 3h-3v11l-3 1-3-1V12H2L0 9V2zM4 3v2h8V3z" /></svg>
              </button>
              <button aria-label="Bookmark this page">
                <svg width="34" height="32" viewBox="-1 -1 32 30" fill="none" stroke="#6a6a6a" strokeWidth="2.500"><path d="m15 3 3.300 7.700 8.200.7-6.200 5.400 1.900 8.200-7.200-4.400L7.800 25l1.900-8.200-6.200-5.400 8.200-.7z" /></svg>
              </button>
            </BoxTools>
          </Omnibox>
          <Extension />
        </NavBar>

        <Page>
          <Editor>
            <EditorBar>
              <Lead>
                <a href="#contracts" aria-label="Back to contracts">
                  <svg width="42" height="38" viewBox="0 0 42 38" fill="none" stroke="#58aae0" strokeWidth="3" strokeLinecap="round" strokeLinejoin="round"><path d="M19 3 3 19l16 16M3 19h37" /></svg>
                </a>
                <TitleGroup>
                  <Title>Order Form</Title>
                  <button aria-label="Rename">
                    <svg width="28" height="28" viewBox="0 0 28 28" fill="none" stroke="#8fb9dd" strokeWidth="2" strokeLinejoin="round"><path d="M1 27v-7L20 1.500q1-1 2 0l4.500 4.500q1 1 0 2L8 26.500zM16 5.500l6.500 6.500" /></svg>
                  </button>
                  <Version>Version 4.2</Version>
                </TitleGroup>
              </Lead>
              <Actions>
                <Saved>Saved 6 days ago</Saved>
                <Button $kind="outline">Save</Button>
                <Button $kind="solid">Publish</Button>
                <IconButton $w={92} aria-label="More">
                  <svg width="34" height="8" viewBox="0 0 34 8" fill="#8396a8"><circle cx="4" cy="4" r="4" /><circle cx="17" cy="4" r="4" /><circle cx="30" cy="4" r="4" /></svg>
                </IconButton>
                <IconButton $w={52} aria-label="Menu">
                  <svg width="44" height="28" viewBox="0 0 44 28" stroke="#8396a8" strokeWidth="3" strokeLinecap="round"><path d="M2 2h40M2 14h40M2 26h40" /></svg>
                </IconButton>
              </Actions>
            </EditorBar>

            <Doc>
              <Block>
                <FormatBar role="toolbar" aria-label="Formatting">
                  <Picker $wide>
                    <select aria-label="Font"><option>Default</option></select>
                    <Chevron />
                  </Picker>
                  <Picker>
                    <select aria-label="Size"><option>(14)</option></select>
                    <Chevron />
                  </Picker>
                  <Tool $on aria-label="Bold">
                    <svg width="20" height="26" viewBox="0 0 20 26" fill="none" stroke="#fff" strokeWidth="4"><path d="M4 3h6q5.500 0 5.500 4.700T10 12.500H4zM4 12.500h7q6 0 6 5t-6 5.500H4zM4 2v22" /></svg>
                  </Tool>
                  <Tool aria-label="Italic">
                    <svg width="18" height="26" viewBox="0 0 18 26" fill="none" stroke="#fff" strokeWidth="2.500"><path d="M7 2h9M2 24h9M11.500 2l-5 22" /></svg>
                  </Tool>
                  <Tool aria-label="Underline">
                    <svg width="22" height="30" viewBox="0 0 22 30" fill="none" stroke="#fff" strokeWidth="2.800"><path d="M4 1v14q0 8 7 8t7-8V1" /><path d="M2 28h18" strokeWidth="2" /></svg>
                  </Tool>
                  <Tool $w={128} aria-label="Text colour">
                    <svg width="42" height="52" viewBox="0 0 42 52"><path d="M13.500 38 21 16.500 28.500 38M16 31h10" fill="none" stroke="#fff" strokeWidth="2.800" /><path d="M1 44h40v6H1z" fill="#616470" /></svg>
                    <Chevron />
                  </Tool>
                  <Tool $w={126} $gap={30} aria-label="Alignment">
                    <svg width="30" height="26" viewBox="0 0 30 26" stroke="#fff" strokeWidth="2"><path d="M1 3h28M1 10h21M1 16h28M1 23h20" /></svg>
                    <Chevron />
                  </Tool>
                  <Tool $w={118} aria-label="Line spacing">
                    <svg width="42" height="30" viewBox="0 0 42 30" fill="none" stroke="#fff" strokeWidth="2"><path d="M7 1v28M1.500 7.500 7 1.500l5.500 6M1.500 22.500 7 28.500l5.500-6M18 4h24M18 12h24M18 19h24M18 26h19" /></svg>
                    <Chevron />
                  </Tool>
                  <Tool aria-label="Link">
                    <svg width="22" height="30" viewBox="-11 -15 22 30" fill="none" stroke="#fff" strokeWidth="2.600" strokeLinecap="round"><path d="M-2.500 2.500C-5-.5-4-4-2-7L0-10.500Q3-15 7-12.500 10-10 8-5.500L5.500-.5Q4 2.500 0 3" /><path d="M2.500-2.500C5 .5 4 4 2 7L0 10.500Q-3 15-7 12.500-10 10-8 5.500L-5.500.5Q-4-2.500 0-3" /></svg>
                  </Tool>
                  <Tool aria-label="Clear formatting">
                    <svg width="26" height="30" viewBox="0 0 26 30" fill="none" stroke="#fff" strokeWidth="2.400"><path d="M2 6V3h17v3M11 3 7.500 23M1 24h12M15 17l10 12M25 17 15 29" /></svg>
                  </Tool>
                </FormatBar>
                <ParaMark aria-label="Paragraph">
                  <svg width="26" height="30" viewBox="0 0 26 30" fill="none" stroke="#fff" strokeWidth="2.500"><path d="M23 29V2H8.500Q1 3 1 9t7.500 8H14M14 2v27M18 2v27" /></svg>
                </ParaMark>
                <Para>
                  <Selected>This Order Form sets forth the terms and conditions specific to your use of the</Selected>{" "}
                  <Selected $joined>PactSafe Services, and constitute</Selected>s an Addendum to the PactSafe Terms of Service. To the extent of any conflict between the PactSafe Terms of Service and this Order Form, this Order Form shall govern.
                </Para>
              </Block>
              <Para>
                By accepting this Order Form, you accept our terms hosted at <DocLink href="#terms">http://legal.neighborino.co/legal.html#terms-of-use</DocLink>.
              </Para>
              <Heading $main>Pricing</Heading>
              <TableWrap>
                <Table>
                  <thead>
                    <tr><th scope="col">PRODUCT/SERVICE</th><th scope="col">COST</th></tr>
                  </thead>
                  <tbody>
                    <tr><td><Token>number_of_seats</Token> Seats</td><td>$<Token $active>cost_per_seat</Token> per month (per Seat)</td></tr>
                    <tr><td>API access</td><td>$<Token>api_access_cost</Token></td></tr>
                    <tr><td>Setup &amp; implementation fees</td><td>$<Token>setup_fee</Token></td></tr>
                    <tr><td><Token>custom_description</Token></td><td><Token>custom_cost</Token></td></tr>
                    <tr><td>TOTAL ANNUAL SUBSCRIPTION:</td><td>$<Token>total_cost</Token></td></tr>
                  </tbody>
                </Table>
                <Gear aria-label="Table settings">
                  <svg width="38" height="38" viewBox="-19 -19 38 38" fill="none" stroke="#55a2d9" strokeWidth="2.800" strokeLinejoin="round">
                    <path d="M-3 -13.500Q0 -12 3 -13.500L5 -16.500 10.500 -14 10 -10Q10.500 -7 13 -5.500L17 -3V3L13 5.500Q10.500 7 10 10L10.500 14 5 16.500 3 13.500Q0 12 -3 13.500L-5 16.500 -10.500 14 -10 10Q-10.500 7 -13 5.500L-17 3V-3L-13 -5.500Q-10.500 -7 -10 -10L-10.500 -14 -5 -16.500z" />
                    <circle r="5" />
                  </svg>
                </Gear>
              </TableWrap>
              <Heading>Subscription Term</Heading>
            </Doc>
          </Editor>

          <Panel>
            <PanelTop>
              <Title as="h2">Edit Token</Title>
              <Close aria-label="Close panel"><Cross size={24} box={36} color="#8698a9" /></Close>
            </PanelTop>
            <FieldGroup>
              <Label htmlFor="name">Name</Label>
              <Field id="name" $plain readOnly defaultValue="cost_per_seat" />
            </FieldGroup>
            <FieldGroup>
              <Label htmlFor="value">Default Value</Label>
              <Field id="value" defaultValue="45" />
            </FieldGroup>
            <RestrictRow>
              <div>
                <Label htmlFor="restrict">Restrict Values</Label>
                <Hint>Allow only predefined values?</Hint>
              </div>
              <Toggle id="restrict" type="checkbox" defaultChecked />
            </RestrictRow>
            <Label htmlFor="option-0">Options</Label>
            {OPTIONS.map((o, i) => (
              <OptionRow key={o}>
                <Field id={`option-${i}`} aria-label={i ? `Option ${i + 1}` : undefined} defaultValue={o} />
                <button aria-label={`Remove ${o}`}><Cross size={19} box={24} color="#b3c0cd" /></button>
              </OptionRow>
            ))}
            <AddRow><Button $kind="small">Add</Button></AddRow>
            <PanelButtons>
              <Button $kind="solid">Save</Button>
              <Button $kind="plain">Cancel</Button>
            </PanelButtons>
          </Panel>
          <Launcher aria-label="Open help" />
        </Page>
      </Window>

      <Desktop>
        <Sheet $w={393} />
        <Sheet $w={410}>February</Sheet>
        <Sheet $w={737} $low><Dim>Last opened</Dim>Yesterday, 5:55 PM</Sheet>
        <Sheet $w={548} $dark />
      </Desktop>
    </Screen>
  );
}
